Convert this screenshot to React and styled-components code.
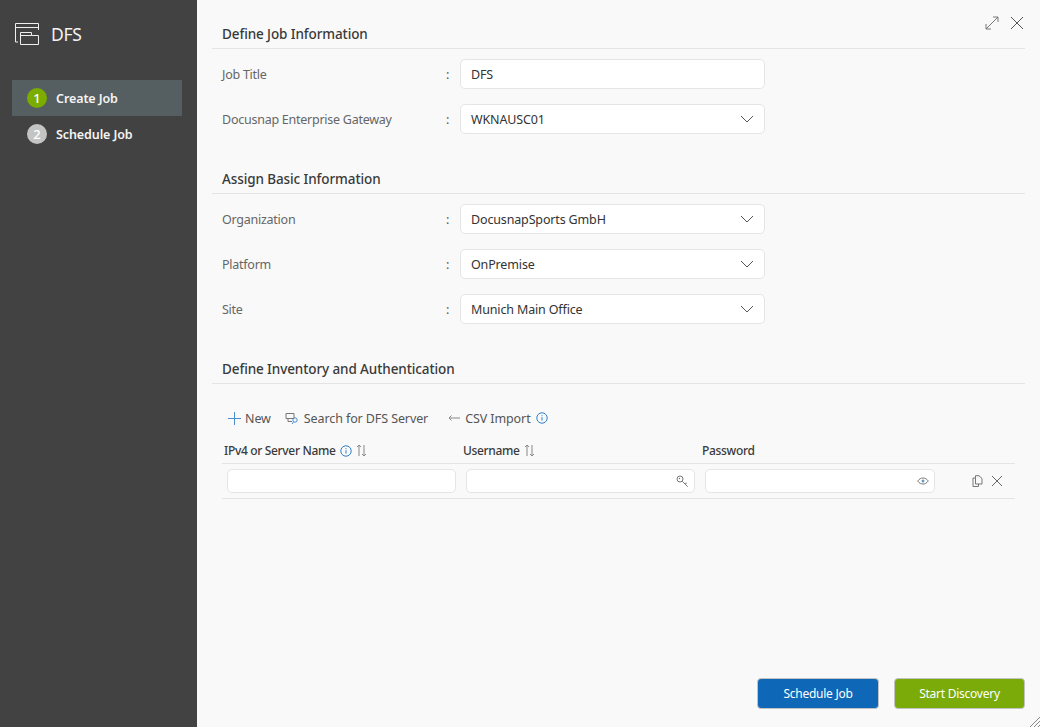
import React from "react";
import styled, { createGlobalStyle } from "styled-components";

const Global = createGlobalStyle`
  html, body { margin: 0; padding: 0; height: 100%; overflow: hidden; }
  #root { height: 100%; }
  body { font-family: "Noto Sans", "Open Sans", sans-serif; font-size: 12.5px; color: #333; }
`;
const Page = styled.div`
  display: flex; width: 1040px; height: 727px; background: #f9f9f9; position: relative;
`;
const Sidebar = styled.aside`
  width: 197px; flex: none; background: #424242; display: flex; flex-direction: column; padding: 0 15px 0 12px; box-sizing: border-box;
`;
const Brand = styled.div`
  display: flex; align-items: center; gap: 12px; height: 80px; padding: 0 0 13px 3px; box-sizing: border-box;
  color: #f2f2f2; font-size: 17.5px; letter-spacing: -0.3px;
`;
const Step = styled.div`
  display: flex; align-items: center; gap: 9px; height: 36px; padding-left: 15px;
  background: ${p => (p.$active ? "#555e61" : "transparent")};
  color: #f4f4f4; font-size: 12.5px; font-weight: 600; letter-spacing: -0.1px;
`;
const StepNum = styled.span`
  width: 20px; height: 20px; border-radius: 50%; display: flex; align-items: center; justify-content: center;
  background: ${p => (p.$active ? "#7aad00" : "#c4c4c4")}; color: #fff; font-size: 13px; font-weight: 500;
`;
const Main = styled.main`
  flex: 1; min-width: 0; display: flex; flex-direction: column; padding: 0 15px 18px 15px; box-sizing: border-box; position: relative;
`;
const TopIcons = styled.div`
  position: absolute; top: 16px; right: 16px; display: flex; gap: 11px; align-items: center;
`;
const SectionTitle = styled.h2`
  margin: ${p => (p.$first ? "24px" : "0")} 0 0; height: ${p => (p.$first ? "25px" : "26px")}; box-sizing: border-box; padding-left: 10px;
  border-bottom: 1px solid #e4e4e4; font-size: 13.5px; font-weight: 500; color: #3a3a3a;
  line-height: ${p => (p.$first ? "20px" : "22px")}; letter-spacing: -0.1px;
`;
const Form = styled.div`
  display: flex; flex-direction: column; gap: 15px; padding: 10px 0 0 10px; margin-bottom: ${p => p.$mb}px;
`;
const Row = styled.div`
  display: grid; grid-template-columns: 224px 14px 305px; align-items: center;
`;
const Label = styled.span` color: #666; font-size: 12.5px; letter-spacing: -0.25px; `;
const Colon = styled.span` color: #555; `;
const Field = styled.div`
  height: 30px; box-sizing: border-box; background: #fff; border: 1px solid #e5e5e5; border-radius: 5px;
  display: flex; align-items: center; justify-content: space-between; padding: 0 10px; color: #333; font-size: 12.5px; letter-spacing: -0.15px;
`;
const Toolbar = styled.div`
  display: flex; align-items: center; height: 24px; margin: 22px 0 0 16px; color: #555; font-size: 12.5px; letter-spacing: -0.1px;
`;
const ToolItem = styled.span`
  display: inline-flex; align-items: center; gap: ${p => p.$gap || 5}px; margin-right: ${p => p.$mr || 0}px;
`;
const Spacer = styled.span` width: ${p => p.$w}px; `;
const Table = styled.div` margin: 8px 10px 0 10px; `;
const Cols = styled.div` display: grid; grid-template-columns: 239px 239px 240px 1fr; `;
const Head = styled(Cols)` height: 25px; border-bottom: 1px solid #e4e4e4; align-items: center; `;
const HeadCell = styled.span`
  display: flex; align-items: center; gap: 4px; padding-left: 2px; font-size: 12px; font-weight: 500; color: #3a3a3a; letter-spacing: -0.33px;
`;
const BodyRow = styled(Cols)`
  height: 35px; box-sizing: border-box; border-bottom: 1px solid #e4e4e4; align-items: center;
`;
const CellInput = styled.div`
  height: 24px; box-sizing: border-box; margin-left: 5px; width: ${p => p.$w || 229}px; background: #fff; border: 1px solid #e5e5e5; border-radius: 5px;
  display: flex; align-items: center; justify-content: flex-end; padding-right: 5px;
`;
const RowActions = styled.div`
  display: flex; justify-content: flex-end; align-items: center; gap: 8px; padding-right: 12px;
`;
const Footer = styled.div` margin-top: auto; display: flex; justify-content: flex-end; gap: 15px; `;
const Button = styled.button`
  height: 31px; width: ${p => p.$w}px; border: 1px solid #c3c3c3; border-radius: 4px; background: ${p => p.$bg}; color: #fff;
  font-family: inherit; font-size: 12px; letter-spacing: -0.25px; padding: 0;
`;
const Grip = styled.svg` position: absolute; right: 0; bottom: 0; `;

const Chevron = () => (
  <svg width="14" height="8" viewBox="0 0 14 8" fill="none" stroke="#555" strokeWidth="1"><path d="M1 1l6 6 6-6" /></svg>
);
const Info = () => (
  <svg width="12" height="12" viewBox="0 0 12 12" fill="none" stroke="#2f7fc8"><circle cx="6" cy="6" r="5.2" /><path d="M6 5.2v3.3M6 3.2v1" /></svg>
);
const Sort = () => (
  <svg width="11" height="13" viewBox="0 0 11 13" fill="none" stroke="#888"><path d="M3 12V1M1 3l2-2 2 2M8 1v11M6 10l2 2 2-2" /></svg>
);
const Logo = () => (
  <svg width="24" height="23" viewBox="0 0 24 23" fill="none" stroke="#efefef" strokeWidth="1"><path d="M3 20H.5V1.500H23.500V8" /><path d="M.5 5.500H23.500" /><path d="M5.500 22.500V10.500H16.500V13.500H23.500V22.500Z" /><path d="M5.500 13.500H16.500" /></svg>
);
const Select = ({ children }) => <Field>{children}<Chevron /></Field>;

export default function App() {
  return (
    <Page>
      <Global />
      <Sidebar>
        <Brand><Logo />DFS</Brand>
        <Step $active><StepNum $active>1</StepNum>Create Job</Step>
        <Step><StepNum>2</StepNum>Schedule Job</Step>
      </Sidebar>
      <Main>
        <TopIcons>
          <svg width="14" height="14" viewBox="0 0 14 14" fill="none" stroke="#777"><path d="M1 13L13 1M8 1h5v5M1 8v5h5" /></svg>
          <svg width="14" height="14" viewBox="0 0 14 14" fill="none" stroke="#555"><path d="M1 1l12 12M13 1L1 13" /></svg>
        </TopIcons>
        <SectionTitle $first>Define Job Information</SectionTitle>
        <Form $mb={34}>
          <Row><Label>Job Title</Label><Colon>:</Colon><Field>DFS</Field></Row>
          <Row><Label>Docusnap Enterprise Gateway</Label><Colon>:</Colon><Select>WKNAUSC01</Select></Row>
        </Form>
        <SectionTitle>Assign Basic Information</SectionTitle>
        <Form $mb={34}>
          <Row><Label>Organization</Label><Colon>:</Colon><Select>DocusnapSports GmbH</Select></Row>
          <Row><Label>Platform</Label><Colon>:</Colon><Select>OnPremise</Select></Row>
          <Row><Label>Site</Label><Colon>:</Colon><Select>Munich Main Office</Select></Row>
        </Form>
        <SectionTitle>Define Inventory and Authentication</SectionTitle>
        <Toolbar>
          <ToolItem $mr={14} $gap={4}>
            <svg width="13" height="13" viewBox="0 0 13 13" stroke="#4a8fd0" fill="none"><path d="M6.500 0v13M0 6.500h13" /></svg>New
          </ToolItem>
          <ToolItem $mr={20} $gap={5}>
            <svg width="14" height="14" viewBox="0 0 14 14" fill="none" stroke="#777"><path d="M1 2.500h8v5H1zM3 7.500v3h4" /><circle cx="10" cy="9" r="2.200" stroke="#4a8fd0" /><path d="M8.500 11L7 13" stroke="#4a8fd0" /></svg>Search for DFS Server
          </ToolItem>
          <ToolItem $gap={5}>
            <svg width="12" height="8" viewBox="0 0 12 8" fill="none" stroke="#888"><path d="M1 4h11M3.500 1.500L1 4l2.500 2.500" /></svg>CSV Import
          </ToolItem>
          <Spacer $w={5} />
          <Info />
        </Toolbar>
        <Table>
          <Head>
            <HeadCell>IPv4 or Server Name <Info /><Sort /></HeadCell>
            <HeadCell>Username <Sort /></HeadCell>
            <HeadCell>Password</HeadCell>
            <span />
          </Head>
          <BodyRow>
            <CellInput />
            <CellInput>
              <svg width="13" height="13" viewBox="0 0 13 13" fill="none" stroke="#777"><circle cx="4" cy="4" r="3" /><path d="M6.200 6.200l5.500 5.500M9 9l1.800-1" /><circle cx="3.500" cy="3.500" r="0.700" fill="#2f7fc8" stroke="none" /></svg>
            </CellInput>
            <CellInput $w={230}>
              <svg width="12" height="8" viewBox="0 0 12 8" fill="none" stroke="#777"><path d="M.7 4C2.500 1.700 4 1 6 1s3.500.7 5.300 3C9.500 6.300 8 7 6 7S2.500 6.300.7 4z" /><circle cx="6" cy="4" r="1.500" fill="#6a9ac4" stroke="none" /></svg>
            </CellInput>
            <RowActions>
              <svg width="11" height="12" viewBox="0 0 11 12" fill="none" stroke="#777"><path d="M3.500 3H1v8.500h5.500V9" /><path d="M3.500.7H7L10 3.500V9H3.500z" /></svg>
              <svg width="12" height="12" viewBox="0 0 12 12" fill="none" stroke="#666"><path d="M1 1l10 10M11 1L1 11" /></svg>
            </RowActions>
          </BodyRow>
        </Table>
        <Footer>
          <Button $w={122} $bg="#0f67b7">Schedule Job</Button>
          <Button $w={131} $bg="#7aab08">Start Discovery</Button>
        </Footer>
      </Main>
      <Grip width="11" height="11" viewBox="0 0 11 11" stroke="#8a8a8a" fill="none"><path d="M11 1L1 11M11 5L5 11M11 9L9 11" /></Grip>
    </Page>
  );
}
